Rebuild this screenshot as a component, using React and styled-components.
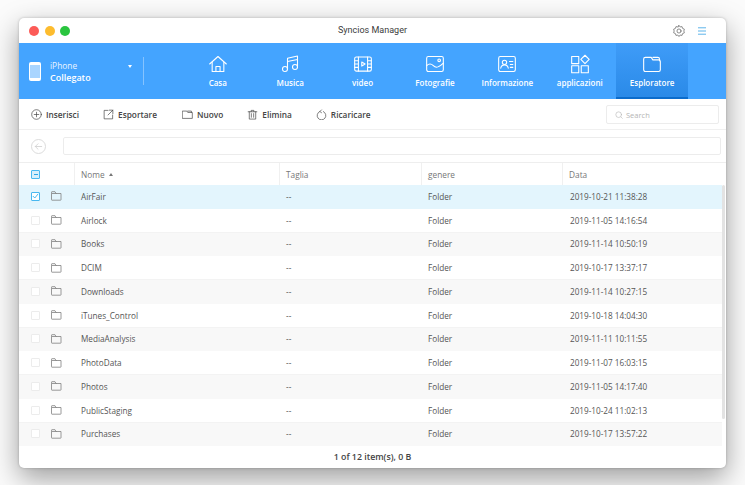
import React from "react";
import styled, { createGlobalStyle } from "styled-components";

const Global = createGlobalStyle`
  html, body { margin: 0; padding: 0; background: #fbfbfb; }
  body { font-family: "Open Sans", "Liberation Sans", sans-serif; width: 745px; height: 485px; overflow: hidden; }
`;
const Page = styled.div`
  width: 745px; height: 485px; padding: 18px 19px 17px; box-sizing: border-box;
`;
const Window = styled.div`
  width: 707px; height: 450px; background: #fff; border-radius: 5px; overflow: hidden;
  display: flex; flex-direction: column; position: relative;
  box-shadow: 0 10px 28px rgba(0,0,0,.38), 0 0 3px rgba(0,0,0,.22);
`;
const TitleBar = styled.div`
  height: 25px; flex: none; display: flex; align-items: center; position: relative;
  padding: 0 0 0 10px;
`;
const Light = styled.span`
  width: 10px; height: 10px; border-radius: 50%; margin-right: 5.5px; background: ${p => p.$c};
`;
const Title = styled.div`
  position: absolute; left: 0; right: 0; text-align: center; font: 9px "Roboto", sans-serif; color: #3c3c3c; line-height: 25px;
`;
const TitleTools = styled.div`
  margin-left: auto; display: flex; align-items: center; gap: 12px; padding-right: 20px; color: #6a6a6a; position: relative;
`;
const Nav = styled.div`
  height: 56px; flex: none; background: #44a4ff; display: flex; color: #fff;
`;
const Device = styled.div`
  width: 125px; flex: none; position: relative; display: flex; align-items: center; padding-left: 10px; box-sizing: border-box;
  &::after { content: ""; position: absolute; right: 0; top: 14px; height: 28px; width: 1px; background: rgba(255,255,255,.35); }
`;
const DeviceText = styled.div`
  margin-left: 9px; display: flex; flex-direction: column; gap: 1px; padding-top: 1px; font-size: 8.4px; line-height: 11px; color: #eaf4ff;
  b { font-size: 9px; font-weight: 600; line-height: 12px; color: #fff; }
`;
const Caret = styled.span`
  position: absolute; left: 109px; top: 22px; width: 0; height: 0;
  border-left: 2.5px solid transparent; border-right: 2.5px solid transparent; border-top: 3.5px solid #fff;
`;
const NavItems = styled.div`
  display: flex; margin-left: 37.6px;
`;
const NavItem = styled.div`
  width: 72.4px; box-sizing: border-box; display: flex; flex-direction: column; align-items: center; padding-top: 11px;
  font-size: 8px; font-weight: 600; line-height: 12px; color: #fff;
  background: ${p => p.$active ? "linear-gradient(#3f9cf8, #2a8ae8)" : "transparent"};
  border-bottom: 2px solid ${p => p.$active ? "#0b6ccc" : "transparent"};
  svg { height: 20px; width: 20px; margin-bottom: 3px; flex: none; }
`;
const Toolbar = styled.div`
  height: 31px; flex: none; display: flex; align-items: center; padding: 1px 7px 0 12px; border-bottom: 1px solid #f0f0f0; box-sizing: border-box;
`;
const ToolButton = styled.div`
  display: flex; align-items: center; gap: 4px; font-size: 8.3px; font-weight: 600; color: #444; margin-right: ${p => p.$gap}px;
  svg { width: 11px; height: 11px; flex: none; }
`;
const SearchBox = styled.div`
  margin-left: auto; width: 113px; height: 19px; border: 1px solid #ececec; border-radius: 2px; box-sizing: border-box;
  display: flex; align-items: center; gap: 3px; padding-left: 8px; font-size: 7.5px; color: #b5b5b5;
`;
const PathRow = styled.div`
  height: 33px; flex: none; display: flex; align-items: center; padding: 0 5px 0 12px; box-sizing: border-box; border-bottom: 1px solid #eeeeee;
`;
const BackButton = styled.div`
  width: 15px; height: 15px; border-radius: 50%; border: 1px solid #dcdcdc; box-sizing: border-box; color: #d0d0d0;
  display: flex; align-items: center; justify-content: center; margin-right: 17px;
`;
const PathField = styled.div`
  flex: 1; height: 18px; border: 1px solid #ececec; border-radius: 2px; box-sizing: border-box;
`;
const Columns = `grid-template-columns: 56px 205px 142px 141px 1fr;`;
const HeadRow = styled.div`
  height: 22px; flex: none; display: grid; ${Columns} align-items: stretch; font-size: 8.3px; color: #777; box-sizing: border-box;
`;
const HeadCell = styled.div`
  display: flex; align-items: center; padding-left: ${p => p.$first ? 12 : 6}px; gap: 4px;
  border-right: ${p => p.$last ? "none" : "1px solid #f0f0f0"};
`;
const SortUp = styled.span`
  width: 0; height: 0; border-left: 2.5px solid transparent; border-right: 2.5px solid transparent; border-bottom: 3px solid #777;
`;
const Body = styled.div`
  flex: 1; position: relative; min-height: 0;
`;
const Row = styled.div`
  height: 23.76px; display: grid; ${Columns} align-items: center; box-sizing: border-box; width: 703px;
  font-size: 8.2px; color: #555;
  background: ${p => p.$selected ? "#e3f5fd" : p.$odd ? "#f8f8f8" : "#fff"};
  border-bottom: 1px solid ${p => p.$selected || p.$odd ? "transparent" : "#f3f3f3"};
`;
const CheckCell = styled.div`
  display: flex; align-items: center; padding-left: 12px; gap: 11px;
  svg { flex: none; }
`;
const Check = styled.span`
  width: 9px; height: 9px; box-sizing: border-box; border: 1px solid ${p => p.$on ? "#49b8f0" : "#ececec"};
  background: #fff; border-radius: 1px; display: flex; align-items: center; justify-content: center; flex: none;
`;
const HeadCheck = styled(Check)`
  border-color: #49b8f0; background: #d8effb;
  &::after { content: ""; width: 4px; height: 1px; background: #2ea5e6; }
`;
const Cell = styled.div`
  padding-left: ${p => p.$pad ?? 6}px;
`;
const Scroll = styled.div`
  position: absolute; right: 1px; top: 0; width: 3px; height: 234px; background: #e3e3e3; border-radius: 2px;
`;
const Footer = styled.div`
  height: 23px; flex: none; display: flex; align-items: center; justify-content: center;
  font-size: 8.8px; font-weight: 600; color: #444;
`;

const Ic = ({ children, size = 20, sw = 1.3 }) => (
  <svg width={size} height={size} viewBox="0 0 24 24" fill="none" stroke="currentColor" strokeWidth={sw} strokeLinecap="round" strokeLinejoin="round">{children}</svg>
);
const items = [
  ["Casa", <Ic><path d="M2 12 12 3l10 9" /><path d="M5 10v11h14V10" /><path d="M9.5 21v-6h5v6" /></Ic>],
  ["Musica", <Ic><path d="M9 18V5l12-2.5V15" /><path d="M9 9l12-2.5" /><circle cx="6" cy="18" r="3" /><circle cx="18" cy="15.5" r="3" /></Ic>],
  ["video", <Ic><rect x="2" y="3.5" width="20" height="17" rx="2" /><path d="M6.5 3.5v17M17.5 3.5v17M2 8h4.5M2 12h4.5M2 16h4.5M17.5 8H22M17.5 12H22M17.5 16H22" /><path d="m10.5 9.5 4 2.5-4 2.5z" /></Ic>],
  ["Fotografie", <Ic><rect x="2" y="3" width="20" height="18" rx="2" /><path d="M2 14c3-3 5-3 8 0s6 3 12-3" /><circle cx="17" cy="7.500" r="1.600" /></Ic>],
  ["Informazione", <Ic><rect x="2" y="3" width="20" height="18" rx="2" /><circle cx="9" cy="10" r="2.600" /><path d="M4.500 17c.5-3 2.300-4 4.500-4s4 1 4.500 4" /><path d="M15 9h4M16 12.500h3M16 16h3" /></Ic>],
  ["applicazioni", <Ic><rect x="2" y="3" width="8.500" height="8.500" /><rect x="2" y="14" width="8.500" height="8.500" /><rect x="13.500" y="14" width="8.500" height="8.500" /><path d="m18 1.500 5 5-5 5-5-5z" /></Ic>],
  ["Esploratore", <Ic><path d="M2 6a2 2 0 0 1 2-2h7l2 3h7a2 2 0 0 1 2 2v10a2 2 0 0 1-2 2H4a2 2 0 0 1-2-2z" /><path d="M13 4h6a2 2 0 0 1 2 2v2" /></Ic>],
];
const Folder = () => (
  <svg width="11" height="10" viewBox="0 0 11 10" fill="none" stroke="#808080" strokeWidth="0.8"><path d="M.5 2.500V1.200a.5.5 0 0 1 .5-.5h3l1 1.800h5v6.200a.5.5 0 0 1-.5.5H1a.5.5 0 0 1-.5-.5z" /><path d="M.5 2.500h5" /></svg>
);
const rows = [
  ["AirFair", "2019-10-21 11:38:28"], ["Airlock", "2019-11-05 14:16:54"], ["Books", "2019-11-14 10:50:19"],
  ["DCIM", "2019-10-17 13:37:17"], ["Downloads", "2019-11-14 10:27:15"], ["iTunes_Control", "2019-10-18 14:04:30"],
  ["MediaAnalysis", "2019-11-11 10:11:55"], ["PhotoData", "2019-11-07 16:03:15"], ["Photos", "2019-11-05 14:17:40"],
  ["PublicStaging", "2019-10-24 11:02:13"], ["Purchases", "2019-10-17 13:57:22"],
];

export default function App() {
  return (
    <Page>
      <Global />
      <Window>
        <TitleBar>
          <Light $c="#fc5b57" /><Light $c="#fdbc2e" /><Light $c="#2ac53f" />
          <Title>Syncios Manager</Title>
          <TitleTools>
            <Ic size={14} sw={1.300}><circle cx="12" cy="12" r="3.500" /><path d="M12 2.500l2 2.600 3.200-.6 1 3.100 3 1.300-.9 3.100.9 3.100-3 1.300-1 3.100-3.200-.6-2 2.600-2-2.600-3.200.6-1-3.100-3-1.300.9-3.100-.9-3.100 3-1.300 1-3.100 3.200.6z" /></Ic>
            <svg width="8" height="8" viewBox="0 0 8 8" stroke="#5db4ea" strokeWidth="1"><path d="M0 .8h8M0 4h8M0 7.200h8" /></svg>
          </TitleTools>
        </TitleBar>
        <Nav>
          <Device>
            <svg width="12" height="19" viewBox="0 0 12 19"><rect width="12" height="19" rx="2" fill="#fff" /><rect x="1" y="3" width="10" height="13" fill="#a9d5ff" /></svg>
            <DeviceText>iPhone<b>Collegato</b></DeviceText>
            <Caret />
          </Device>
          <NavItems>
            {items.map(([label, icon]) => (
              <NavItem key={label} $active={label === "Esploratore"}>{icon}{label}</NavItem>
            ))}
          </NavItems>
        </Nav>
        <Toolbar>
          <ToolButton $gap={24}><Ic sw={1.500}><circle cx="12" cy="12" r="10.500" /><path d="M12 7v10M7 12h10" /></Ic>Inserisci</ToolButton>
          <ToolButton $gap={25}><Ic sw={1.500}><path d="M11 3H2.500v18.500H21V13" /><path d="M14 2.500h7.500V10M21.500 2.500 11 13" /></Ic>Esportare</ToolButton>
          <ToolButton $gap={24}><Ic sw={1.500}><path d="M1.500 4.500h9l2 3h10v13h-21z" /><path d="M12.500 4.500h8v3" /></Ic>Nuovo</ToolButton>
          <ToolButton $gap={24}><Ic sw={1.500}><path d="M2.500 6h19M9 6V3h6v3M5 6v16h14V6M9.500 10v8M14.500 10v8" /></Ic>Elimina</ToolButton>
          <ToolButton $gap={0}><Ic sw={1.500}><path d="M8 5.500a9.500 9.500 0 1 0 8 0" /><path d="M12 2 8.500 5.500 12 8" /></Ic>Ricaricare</ToolButton>
          <SearchBox><Ic size={8} sw={1.800}><circle cx="11" cy="11" r="8.500" /><path d="m18 18 4 4" /></Ic>Search</SearchBox>
        </Toolbar>
        <PathRow>
          <BackButton><Ic size={11} sw={1.800}><path d="M19 12H5M11 6l-6 6 6 6" /></Ic></BackButton>
          <PathField />
        </PathRow>
        <HeadRow>
          <HeadCell $first><HeadCheck /></HeadCell>
          <HeadCell>Nome <SortUp /></HeadCell>
          <HeadCell>Taglia</HeadCell>
          <HeadCell>genere</HeadCell>
          <HeadCell $last>Data</HeadCell>
        </HeadRow>
        <Body>
          {rows.map(([name, date], i) => (
            <Row key={name} $selected={i === 0} $odd={i % 2 === 0 && i > 0}>
              <CheckCell>
                <Check $on={i === 0}>
                  {i === 0 && <svg width="7" height="6" viewBox="0 0 7 6" fill="none" stroke="#49b8f0" strokeWidth="1"><path d="M.8 3 2.800 5 6.200.8" /></svg>}
                </Check>
                <Folder />
              </CheckCell>
              <Cell>{name}</Cell>
              <Cell>--</Cell>
              <Cell>Folder</Cell>
              <Cell $pad={7}>{date}</Cell>
            </Row>
          ))}
          <Scroll />
        </Body>
        <Footer>1 of 12 item(s), 0 B</Footer>
      </Window>
    </Page>
  );
}
